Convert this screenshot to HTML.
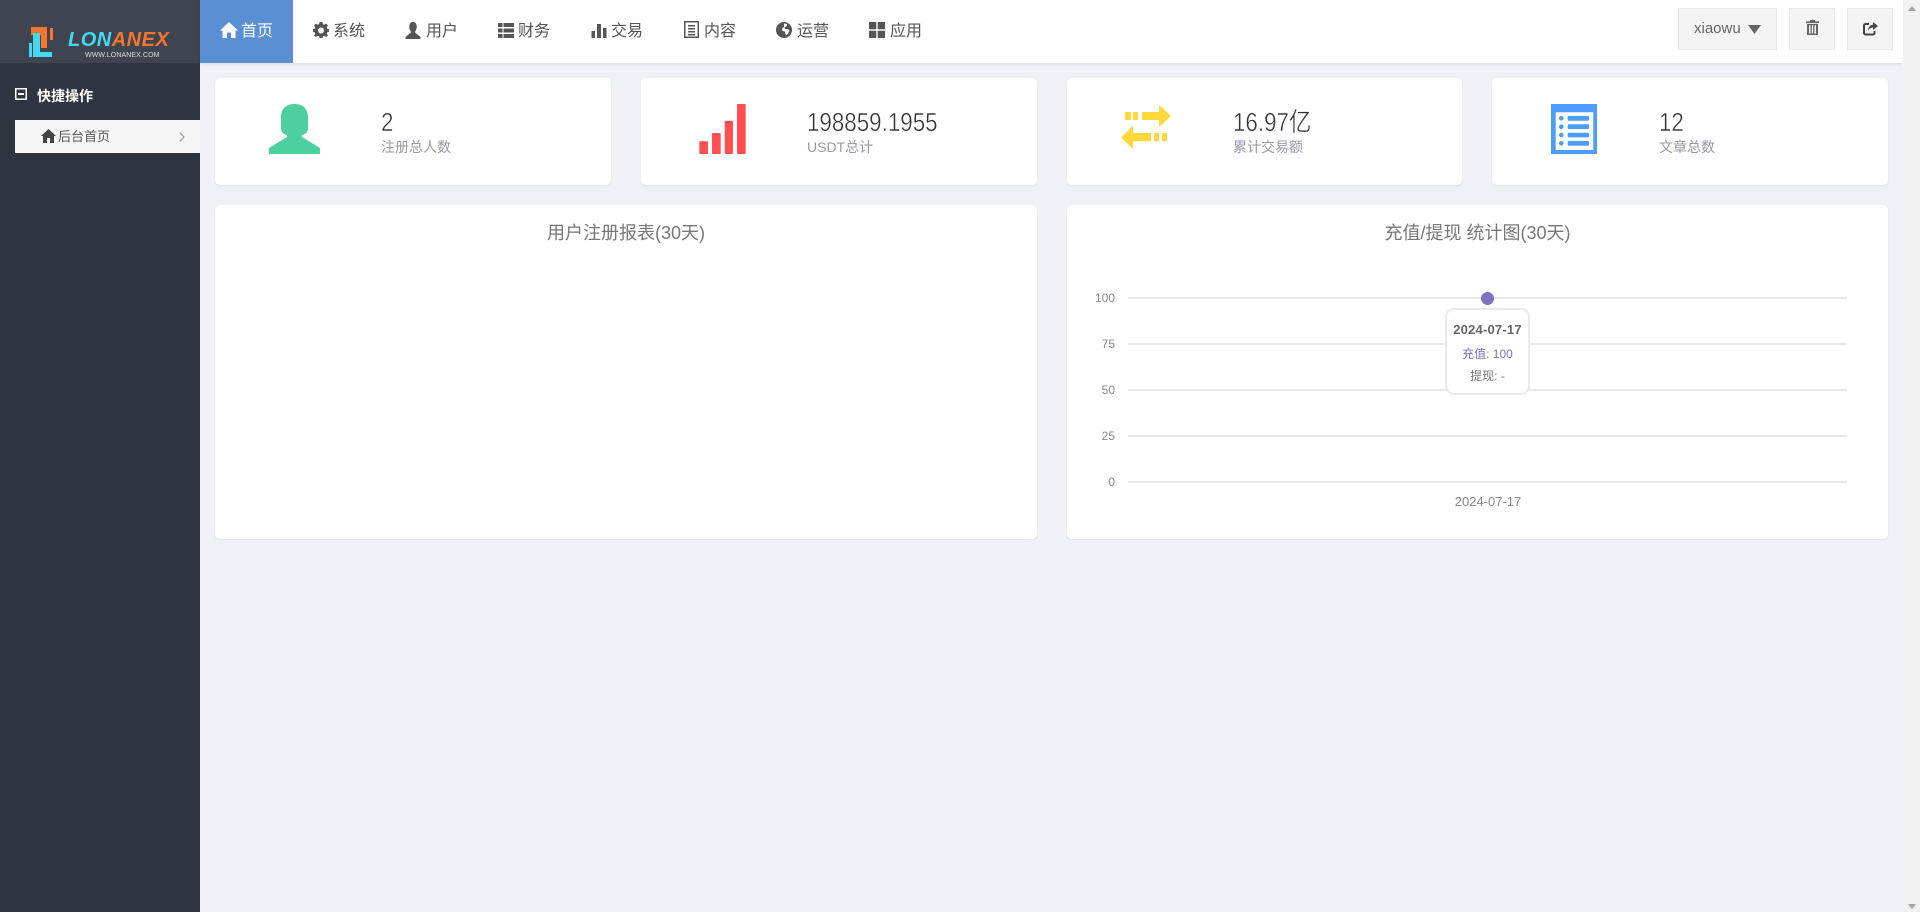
<!DOCTYPE html>
<html><head><meta charset="utf-8"><style>
html,body{margin:0;padding:0;width:1920px;height:912px;overflow:hidden;background:#f0f1f6;font-family:"Liberation Sans","Noto Sans CJK SC",sans-serif}
.a{position:absolute;white-space:nowrap}
svg{position:absolute;display:block}
.nav{position:absolute;top:0;height:63px;line-height:63px;font-size:16px;color:#555;white-space:nowrap}
.card{position:absolute;background:#fff;border-radius:5px;box-shadow:0 1px 2px rgba(0,0,0,.06)}
.num{position:absolute;font-size:26px;line-height:30px;color:#333;white-space:nowrap;transform:scaleX(.86);transform-origin:0 0;-webkit-text-stroke:.45px #fff}
.lab{position:absolute;font-size:14px;line-height:16px;color:#9a9aa5;white-space:nowrap}
.t{position:absolute;font-size:18px;color:#777;line-height:24px;text-align:center}
.y{position:absolute;width:60px;text-align:right;font-size:12px;line-height:14px;color:#888}
.g{position:absolute;left:1128px;width:719px;height:2px;background:#e8e8ea}
.btn{position:absolute;top:8px;height:42px;background:#f4f4f4;border:1px solid #e9e9e9;box-sizing:border-box}
</style></head><body>
<!-- sidebar -->
<div class="a" style="left:0;top:63px;width:200px;height:849px;background:#2f3540"></div>
<div class="a" style="left:0;top:0;width:200px;height:63px;background:#3f4550"></div>
<svg style="left:28px;top:26px" width="28" height="34" viewBox="0 0 28 34">
<path d="M3 1H19V22H13V9H3z" fill="#f7752c"/><path d="M22 2H25V14H22z" fill="#f7752c"/>
<path d="M5 7H12V26H24V31H5z" fill="#45d8f5"/><path d="M1 17H4V31H1z" fill="#45d8f5"/></svg>
<div class="a" style="left:68px;top:27px;font-size:20px;line-height:26px;font-weight:bold;font-style:italic;letter-spacing:.5px;color:#45d8f5">LON<span style="color:#f7752c">ANEX</span></div>
<div class="a" style="left:85px;top:51px;font-size:7px;line-height:10px;color:#ddd;letter-spacing:.1px">WWW.LONANEX.COM</div>
<svg style="left:15px;top:88px" width="12" height="12" viewBox="0 0 12 12"><rect x=".75" y=".75" width="10.5" height="10.5" fill="none" stroke="#fff" stroke-width="1.5"/><rect x="3" y="5" width="6" height="2" fill="#fff"/></svg>
<div class="a" style="left:37px;top:87px;font-size:14px;line-height:18px;font-weight:bold;color:#fff">快捷操作</div>
<div class="a" style="left:15px;top:120px;width:185px;height:33px;background:#f5f5f5"></div>
<svg style="left:41px;top:129px" width="15" height="14" viewBox="0 0 15 14"><path d="M7.5 0L15 7H13V14H9V9H6V14H2V7H0z" fill="#444"/></svg>
<div class="a" style="left:58px;top:127.500px;font-size:13px;line-height:18px;color:#555">后台首页</div>
<svg style="left:179px;top:132px" width="6" height="10" viewBox="0 0 6 10"><path d="M.7 .5L5 5L.7 9.500" fill="none" stroke="#999" stroke-width="1.2"/></svg>
<!-- header -->
<div class="a" style="left:200px;top:0;width:1703px;height:63px;background:#fff;box-shadow:0 1px 4px rgba(0,0,0,.1)"></div>
<div class="a" style="left:200px;top:0;width:93px;height:63px;background:#5b8fd3"></div>
<svg style="left:220px;top:22px" width="18" height="16" viewBox="0 0 18 16"><path d="M9 0L18 8.500H15.500V16H11V10.500H7V16H2.500V8.500H0z" fill="#fff"/></svg>
<div class="nav" style="left:241px;color:#fff">首页</div>
<svg style="left:313px;top:22px" width="16" height="16" viewBox="0 0 16 16"><path fill="#555" fill-rule="evenodd" d="M6.500 0h3l.4 2.200 1.500.6L13.200 1.500 15 3.500l-1.300 1.800.6 1.400L16 7v3l-1.700.3-.6 1.400L15 13.500 13.200 15l-1.800-1.300-1.500.6L9.500 16h-3l-.4-1.700-1.500-.6L2.800 15 1 13.500l1.300-1.800-.6-1.400L0 10V7l1.700-.3.600-1.400L1 3.500 2.800 1.500 4.600 2.800l1.500-.6zM8 5.500a3 3 0 1 0 0 6 3 3 0 0 0 0-6z"/></svg>
<div class="nav" style="left:333px">系统</div>
<svg style="left:405px;top:22px" width="16" height="17" viewBox="0 0 14 16"><path d="M7 0C9.500 0 10.500 2 10.500 4.500S9.500 8 9 9V10L14 14V16H0V14L5 10V9C4.500 8 3.500 7 3.500 4.500S4.500 0 7 0z" fill="#555"/></svg>
<div class="nav" style="left:426px">用户</div>
<svg style="left:498px;top:23px" width="16" height="15" viewBox="0 0 16 15"><path d="M0 0H4.500V4H0zM5.500 0H16V4H5.500zM0 5.500H4.500V9.500H0zM5.500 5.500H16V9.500H5.500zM0 11H4.500V15H0zM5.500 11H16V15H5.500z" fill="#555"/></svg>
<div class="nav" style="left:518px">财务</div>
<svg style="left:591px;top:23px" width="16" height="15" viewBox="0 0 16 15"><path d="M.5 8H4V15H.5zM6 1H10V15H6zM12 5H15.500V15H12z" fill="#555"/></svg>
<div class="nav" style="left:611px">交易</div>
<svg style="left:684px;top:21px" width="15" height="17" viewBox="0 0 15 17"><path fill="#555" fill-rule="evenodd" d="M0 0H15V17H0zM1.500 1.500V15.500H13.500V1.500zM4 4H11V5.500H4zM4 7H11V8.500H4zM4 10H11V11.500H4zM4 13H11V14.500H4z"/></svg>
<div class="nav" style="left:704px">内容</div>
<svg style="left:776px;top:22px" width="16" height="16" viewBox="0 0 16 16"><circle cx="8" cy="8" r="8" fill="#555"/><path d="M8 1.500L11 2L10.500 4.500L8.500 5L9 7H12L13.500 9L11 13L9.500 12.500L9 9.500L6.500 9L6 6.500L8 5z" fill="#fff"/></svg>
<div class="nav" style="left:797px">运营</div>
<svg style="left:869px;top:22px" width="16" height="16" viewBox="0 0 16 16"><path d="M0 0H7.300V7.300H0zM8.700 0H16V7.300H8.700zM0 8.700H7.300V16H0zM8.700 8.700H16V16H8.700z" fill="#555"/></svg>
<div class="nav" style="left:890px">应用</div>
<div class="btn" style="left:1678px;width:99px"></div>
<div class="a" style="left:1694px;top:19px;font-size:15px;line-height:20px;color:#666">xiaowu</div>
<svg style="left:1748px;top:25px" width="13" height="9" viewBox="0 0 13 9"><path d="M0 0H13L6.500 9z" fill="#666"/></svg>
<div class="btn" style="left:1789px;width:46px"></div>
<svg style="left:1806px;top:20px" width="13" height="15" viewBox="0 0 13 17" preserveAspectRatio="none"><path fill="#666" fill-rule="evenodd" d="M4 0H9V1.500H13V3.500H0V1.500H4zM1 4.500H12V17H1zM3 6V15.500H4.500V6zM5.800 6V15.500H7.200V6zM8.500 6V15.500H10V6z"/></svg>
<div class="btn" style="left:1847px;width:46px"></div>
<svg style="left:1863px;top:22px" width="15" height="14" viewBox="0 0 15 14"><path d="M6 2H2.500A1.500 1.500 0 0 0 1 3.500V11A1.500 1.500 0 0 0 2.500 12.500H10A1.500 1.500 0 0 0 11.500 11V9" fill="none" stroke="#444" stroke-width="2"/><path d="M10 0L15 4L10 8V5.500C8 5.500 6 6.500 5 9C5 5.500 7 3 10 2.800z" fill="#444"/></svg>
<!-- scrollbar -->
<div class="a" style="left:1903px;top:0;width:17px;height:912px;background:#f1f1f1"></div>
<svg style="left:1908px;top:6px" width="8" height="5" viewBox="0 0 8 5"><path d="M4 0L8 5H0z" fill="#a3a3a3"/></svg>
<svg style="left:1908px;top:904px" width="8" height="5" viewBox="0 0 8 5"><path d="M4 5L8 0H0z" fill="#a3a3a3"/></svg>
<!-- stat cards -->
<div class="card" style="left:215px;top:78px;width:396px;height:107px"></div>
<svg style="left:269px;top:104px" width="52" height="50" viewBox="0 0 52 50"><path d="M25.500 0C34 0 39 5 39 13V24C39 28 37 30 33 31V33L51 44V50H0V44L18 33V31C14 30 12 28 12 24V13C12 5 17 0 25.500 0z" fill="#4dcfa0"/></svg>
<div class="num" style="left:381px;top:107px">2</div>
<div class="lab" style="left:381px;top:139px">注册总人数</div>
<div class="card" style="left:641px;top:78px;width:396px;height:107px"></div>
<svg style="left:699px;top:104px" width="48" height="50" viewBox="0 0 48 50"><g fill="#ff4f53"><rect x=".3" y="37.300" width="8.700" height="12.700" rx="1"/><rect x="13" y="29" width="8.700" height="21" rx="1"/><rect x="25.700" y="16.700" width="8.300" height="33.300" rx="1"/><rect x="38" y="0" width="8.700" height="50" rx="1"/></g></svg>
<div class="num" style="left:807px;top:107px">198859.1955</div>
<div class="lab" style="left:807px;top:139px">USDT总计</div>
<div class="card" style="left:1067px;top:78px;width:395px;height:107px"></div>
<svg style="left:1121px;top:104px" width="52" height="46" viewBox="0 0 52 46"><path d="M4 8H10V16H4zM12 8H17V16H12zM21 8H38V.7L50 12L38 23.300V16H21zM12 21.700L0 33.500L12 45V37.300H30V29H12zM33 29H38V37.300H33zM41 29H46V37.300H41z" fill="#ffd83b"/></svg>
<div class="num" style="left:1233px;top:107px">16.97亿</div>
<div class="lab" style="left:1233px;top:139px">累计交易额</div>
<div class="card" style="left:1492px;top:78px;width:396px;height:107px"></div>
<svg style="left:1551px;top:104px" width="46" height="50" viewBox="0 0 46 50"><path fill="#4d9dfc" fill-rule="evenodd" d="M0 0H46V50H0zM4.700 8.300V46H42.300V8.300z"/><g fill="#4d9dfc"><circle cx="10.300" cy="14.300" r="2.300"/><circle cx="10.300" cy="22.700" r="2.300"/><circle cx="10.300" cy="31" r="2.300"/><circle cx="10.300" cy="39.300" r="2.300"/><rect x="16.700" y="12" width="21.300" height="4.700" rx="1"/><rect x="16.700" y="20.300" width="21.300" height="4.700" rx="1"/><rect x="16.700" y="28.700" width="21.300" height="4.700" rx="1"/><rect x="16.700" y="37" width="21.300" height="4.700" rx="1"/></g></svg>
<div class="num" style="left:1659px;top:107px">12</div>
<div class="lab" style="left:1659px;top:139px">文章总数</div>
<!-- chart cards -->
<div class="card" style="left:215px;top:205px;width:822px;height:334px"></div>
<div class="t" style="left:215px;top:221px;width:822px">用户注册报表(30天)</div>
<div class="card" style="left:1067px;top:205px;width:821px;height:334px"></div>
<div class="t" style="left:1067px;top:221px;width:821px">充值/提现 统计图(30天)</div>
<div class="g" style="top:297px"></div>
<div class="g" style="top:343px"></div>
<div class="g" style="top:389px"></div>
<div class="g" style="top:435px"></div>
<div class="g" style="top:481px"></div>
<div class="y" style="left:1055px;top:291px">100</div>
<div class="y" style="left:1055px;top:337px">75</div>
<div class="y" style="left:1055px;top:383px">50</div>
<div class="y" style="left:1055px;top:429px">25</div>
<div class="y" style="left:1055px;top:475px">0</div>
<div class="a" style="left:1438px;top:495px;width:100px;text-align:center;font-size:13px;line-height:14px;color:#888">2024-07-17</div>
<div class="a" style="left:1481px;top:291.500px;width:13px;height:13px;border-radius:50%;background:#7d72c4"></div>
<div class="a" style="left:1445px;top:308px;width:85px;height:87px;box-sizing:border-box;border:2px solid #eaeaea;border-radius:9px;background:rgba(255,255,255,.95)"></div>
<div class="a" style="left:1445px;top:322px;width:85px;text-align:center;font-size:13px;line-height:16px;font-weight:bold;letter-spacing:.2px;color:#666">2024-07-17</div>
<div class="a" style="left:1445px;top:346px;width:85px;text-align:center;font-size:12px;line-height:16px;color:#7d72c4">充值: 100</div>
<div class="a" style="left:1445px;top:368px;width:85px;text-align:center;font-size:12px;line-height:16px;color:#777">提现: -</div>
</body></html>
